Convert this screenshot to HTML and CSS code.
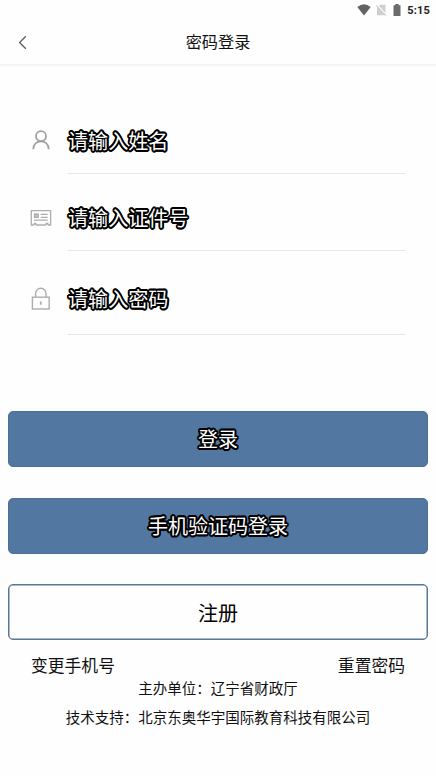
FILE: index.html
```html
<!DOCTYPE html>
<html lang="zh-CN">
<head>
<meta charset="utf-8">
<title>密码登录</title>
<link rel="stylesheet" href="styles.css">
</head>
<body>
<div class="status">
  <svg class="wifi" width="14" height="12" viewBox="0 0 14 12"><path d="M.3 3Q7-2.4 13.7 3L7 11.6Z" fill="#636363"/></svg>
  <svg class="sim" width="11" height="12" viewBox="0 0 11 12"><path d="M4 .8h5.5v10.4H1V4Z" fill="#cfcfcf"/><path d="M.8 1l9.6 10.5" stroke="#fff" stroke-width="2"/><path d="M.2 1.4l9.7 10.2" stroke="#b5b5b5"/></svg>
  <svg class="battery" width="8" height="12" viewBox="0 0 8 12"><path d="M2.3 0h3.4v1.2H7.5V12H.5V1.2h1.8Z" fill="#6c6c6c"/></svg>
  <span class="time">5:15</span>
</div>
<header class="header">
  <svg class="back" width="10" height="15" viewBox="0 0 10 15"><path d="M7.8 1.2 1.6 7.5l6.2 6.3" fill="none" stroke="#5c5c5c" stroke-width="1.3"/></svg>
  <h1 class="title">密码登录</h1>
</header>
<main>
  <form class="form">
    <label class="row row-name">
      <svg class="icon" width="22" height="22" viewBox="0 0 22 22" fill="none" stroke="#a0a0a0" stroke-width="1.8"><circle cx="11" cy="7.2" r="5"/><path d="M3.3 20.3c.2-5.1 3.4-8 7.7-8s7.5 2.9 7.7 8"/></svg>
      <span class="field outlined">请输入姓名</span>
    </label>
    <label class="row row-card">
      <svg class="icon" width="22" height="22" viewBox="0 0 22 22" fill="none" stroke="#adadad" stroke-width="1.3"><path d="M4.2 18H1.3V3.6h19.3V18h-2.8M5.8 18h10.4M4.2 18v-1.6h1.6V18M16.2 18v-1.6h1.6V18"/><rect x="4.5" y="7" width="3.7" height="3.4" fill="#c4c4c4"/><path d="M10.7 7.3h7M10.7 10.3h7M4 13.2h13.7"/></svg>
      <span class="field outlined">请输入证件号</span>
    </label>
    <label class="row row-lock">
      <svg class="icon" width="22" height="24" viewBox="0 0 22 24" fill="none" stroke="#adadad" stroke-width="1.4"><rect x="2.4" y="10.2" width="16.8" height="11.8"/><path d="M5.6 10V6.5a5.2 5.2 0 0 1 10.4 0V10"/><path d="M10.8 14.5v3.2" stroke-width="1.8"/></svg>
      <span class="field outlined">请输入密码</span>
    </label>
  </form>
  <div class="buttons">
    <button class="btn primary outlined">登录</button>
    <button class="btn primary outlined">手机验证码登录</button>
    <button class="btn plain">注册</button>
  </div>
  <nav class="links"><span>变更手机号</span><span>重置密码</span></nav>
</main>
<footer class="footer">
  <p>主办单位：辽宁省财政厅</p>
  <p>技术支持：北京东奥华宇国际教育科技有限公司</p>
</footer>
</body>
</html>
```
FILE: styles.css
```css
* { box-sizing: border-box; }
body {
  margin: 0;
  min-height: 776px;
  background: #fefefe;
  color: #111;
  font-family: Roboto, "Noto Sans CJK SC", sans-serif;
}
svg { display: block; flex: none; }
.status {
  display: flex;
  align-items: center;
  justify-content: flex-end;
  height: 20px;
  padding-right: 6px;
}
.wifi { margin-right: 5px; }
.sim { margin-right: 6px; }
.battery { margin-right: 6px; }
.time {
  font-size: 11px;
  font-weight: 700;
  letter-spacing: .2px;
  color: #222;
}
.header {
  display: grid;
  grid-template-columns: 40px 1fr 40px;
  align-items: center;
  height: 46px;
  border-bottom: 2px solid #f5f5f5;
}
.back { margin-left: 18px; }
.title {
  margin: 0;
  padding-top: 2px;
  font-size: 16.2px;
  font-weight: 400;
  line-height: 24px;
  text-align: center;
}
.form { padding: 43px 31px 0 30px; }
.row {
  display: grid;
  grid-template-columns: 22px 1fr;
  column-gap: 16px;
  align-items: start;
}
.icon { margin-top: 20px; }
.field {
  padding-top: 18px;
  border-bottom: 1px solid #e6e6e6;
  font-size: 20.1px;
  line-height: 30px;
}
.row-name { height: 65px; }
.row-card { height: 77px; }
.row-lock { height: 84px; }
.row .field { height: 100%; }
.row-card .icon { margin-top: 33px; }
.row-card .field { padding-top: 30px; }
.row-lock .icon { margin-top: 36px; }
.row-lock .field { padding-top: 34px; }
.outlined {
  color: #fff;
  text-shadow:
    1.8px 0 #000, 1.66px .69px #000, 1.27px 1.27px #000, .69px 1.66px #000,
    0 1.8px #000, -.69px 1.66px #000, -1.27px 1.27px #000, -1.66px .69px #000,
    -1.8px 0 #000, -1.66px -.69px #000, -1.27px -1.27px #000, -.69px -1.66px #000,
    0 -1.8px #000, .69px -1.66px #000, 1.27px -1.27px #000, 1.66px -.69px #000,
    0 0 1px #000;
}
.buttons {
  display: grid;
  gap: 31px;
  padding: 76px 8px 0;
}
.btn {
  height: 56px;
  padding: 0;
  border: 0;
  border-radius: 5px;
  font: 20px/30px Roboto, "Noto Sans CJK SC", sans-serif;
}
.primary { padding-top: 2px; background: #5277a0; border: 1px solid #4e7096; }
.plain { padding-top: 3px; margin-top: -1px; background: #fefefe; color: #000; border: 1px solid #587796; box-shadow: inset 0 0 0 .5px #587796; }
.links {
  display: flex;
  justify-content: space-between;
  padding: 13px 31px 0;
  font-size: 16.8px;
  line-height: 26px;
}
.footer {
  font-size: 14.5px;
  line-height: 22px;
  text-align: center;
}
.footer p { margin: 0 0 7px; }
```
